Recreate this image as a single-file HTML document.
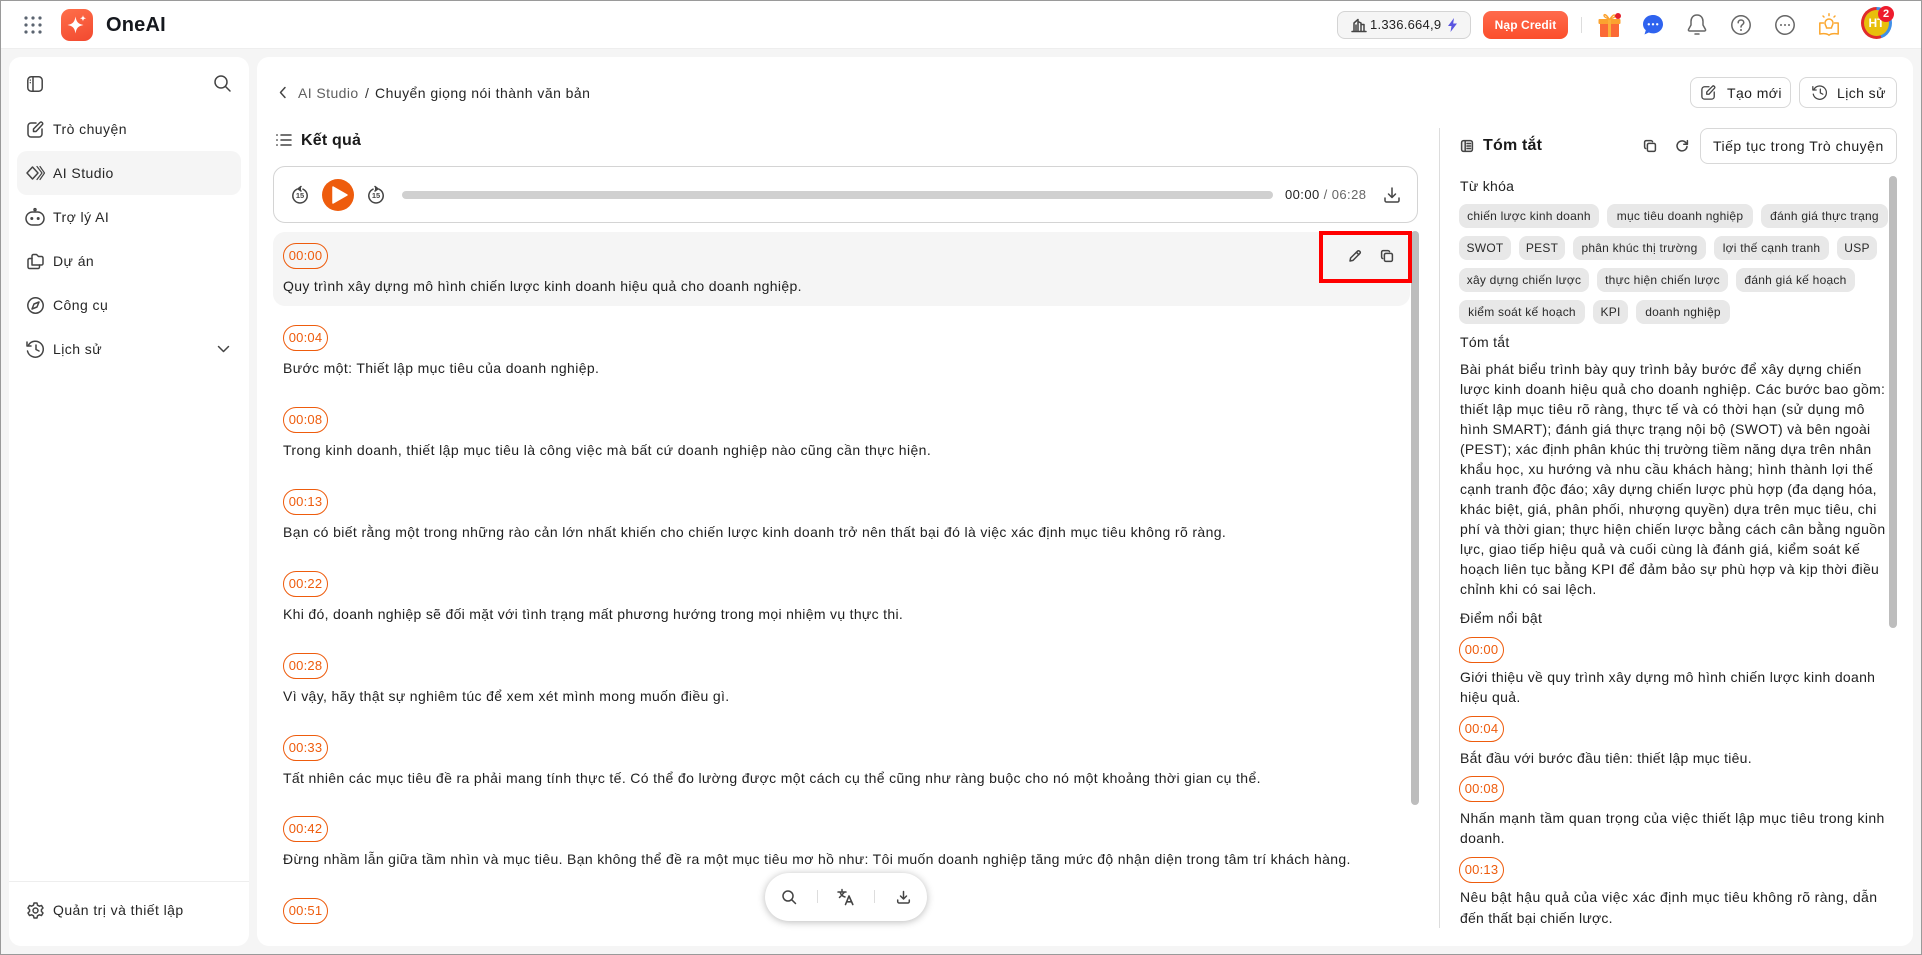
<!DOCTYPE html>
<html lang="vi"><head><meta charset="utf-8"><title>OneAI</title>
<style>
*{box-sizing:border-box}
html,body{margin:0;padding:0}
body{width:1922px;height:955px;overflow:hidden;position:relative;background:#f5f5f5;font-family:"Liberation Sans","Noto Sans CJK SC",sans-serif;color:#1f1f1f;font-size:14px}
.a{position:absolute}
.t{position:absolute;white-space:nowrap;line-height:20px;font-size:14px;letter-spacing:.34px}
.b{position:absolute;left:283px;width:45px;height:26px;border:1px solid #ee5c0d;border-radius:13px;color:#ee5c0d;font-size:13px;line-height:24px;text-align:center;letter-spacing:.2px}
.c{position:absolute;height:24px;background:#e8e8e8;border-radius:8px;font-size:12px;line-height:24px;text-align:center;white-space:nowrap;letter-spacing:.24px;color:#2a2a2a}
.s{position:absolute;left:53px;white-space:nowrap;line-height:20px;font-size:14px;letter-spacing:.44px;color:#262626}
svg{position:absolute;overflow:visible;fill:none;stroke:#444;stroke-width:1.5;stroke-linecap:round;stroke-linejoin:round}
.btn{position:absolute;background:#fff;border:1px solid #d8d8d8;border-radius:8px}
</style></head><body>

<!-- header -->
<div class="a" style="left:0;top:0;width:1922px;height:49px;background:#fff;border-bottom:1px solid #eee"></div>
<svg style="left:24px;top:16px;stroke:none;fill:#5b6470" width="18" height="18" viewBox="0 0 18 18"><circle cx="2" cy="2" r="1.6"/><circle cx="9" cy="2" r="1.6"/><circle cx="16" cy="2" r="1.6"/><circle cx="2" cy="9" r="1.6"/><circle cx="9" cy="9" r="1.6"/><circle cx="16" cy="9" r="1.6"/><circle cx="2" cy="16" r="1.6"/><circle cx="9" cy="16" r="1.6"/><circle cx="16" cy="16" r="1.6"/></svg>
<div class="a" style="left:61px;top:9px;width:32px;height:32px;border-radius:9px;background:linear-gradient(160deg,#ff6f4a,#f2492f)"></div>
<svg style="left:61px;top:9px;stroke:none;fill:#fff" width="32" height="32" viewBox="0 0 32 32"><path d="M14.5 7.5C15.4 13 17 14.8 22.5 16 17 17.2 15.4 19 14.5 24.5 13.6 19 12 17.2 6.5 16 12 14.8 13.6 13 14.5 7.5Z"/><path d="M22 6C22.4 8.2 23 8.8 25.2 9.2 23 9.6 22.4 10.2 22 12.4 21.6 10.2 21 9.6 18.8 9.2 21 8.8 21.6 8.2 22 6Z"/></svg>
<div class="t" style="left:106px;top:13px;font-size:20px;line-height:24px;font-weight:700;letter-spacing:.2px;color:#15181e">OneAI</div>

<div class="a" style="left:1337px;top:11px;width:134px;height:28px;background:#f5f5f5;border:1px solid #d4d4d4;border-radius:8px"></div>
<svg style="left:1352px;top:18px" width="14" height="14" viewBox="0 0 14 14" stroke-width="1.1"><path d="M0 13.5H14M2 13.5V5L6 1.5V13.5M6 3.5L9 5V13.5M9 6.5H12V13.5M4 7V13.5"/></svg>
<div class="t" style="left:1370px;top:15px;font-size:13px;letter-spacing:.24px;color:#222">1.336.664,9</div>
<svg style="left:1448px;top:18px;stroke:none" width="9" height="14" viewBox="0 0 9 14"><path d="M6 0L0 8H3.5L2.5 14L9 5.5H5.2Z" fill="#5a55e0"/></svg>
<div class="a" style="left:1483px;top:11px;width:85px;height:28px;border-radius:8px;background:linear-gradient(180deg,#ff6a4c,#fb4f2c);color:#fff;font-size:12px;font-weight:700;line-height:28px;text-align:center;letter-spacing:.1px">Nạp Credit</div>
<div class="a" style="left:1581px;top:17px;width:1px;height:16px;background:#ddd"></div>

<svg style="left:1598px;top:13px;stroke:none" width="24" height="24" viewBox="0 0 24 24"><rect x="2" y="10" width="19" height="14" rx="1" fill="#fb6a36"/><rect x="0.5" y="6" width="22" height="5" rx="1" fill="#fba22f"/><rect x="10" y="6" width="3" height="18" fill="#fbb03b"/><path d="M11 6C8 5 6 4 6 2.5 6 1 8 1 11 6ZM12 6C14 3 16 1 17 2.5 18 4 15 5 12 6Z" fill="none" stroke="#fba22f" stroke-width="1.4" style="stroke:#fba22f"/><circle cx="20" cy="3" r="3" fill="#e4202c"/></svg>
<svg style="left:1643px;top:15px;stroke:none" width="20" height="20" viewBox="0 0 20 20"><path d="M10 0C15.5 0 20 4 20 9.2S15.5 18.4 10 18.4C8.5 18.4 7 18 5.8 17.5L1.5 19.5 2.8 15.3C1 13.7 0 11.6 0 9.2 0 4 4.5 0 10 0Z" fill="#2f63ef"/><circle cx="5.8" cy="9.3" r="1.2" fill="#fff"/><circle cx="10" cy="9.3" r="1.2" fill="#fff"/><circle cx="14.2" cy="9.3" r="1.2" fill="#fff"/></svg>
<svg style="left:1687px;top:14px" width="20" height="22" viewBox="0 0 20 22"><path d="M10 1C6 1 4 4 4 7.5V11L1.5 15.5C1.2 16.2 1.6 17 2.5 17H17.5C18.4 17 18.8 16.2 18.5 15.5L16 11V7.5C16 4 14 1 10 1Z" style="stroke:#666"/><path d="M8 20H12" style="stroke:#666"/></svg>
<svg style="left:1731px;top:15px" width="20" height="20" viewBox="0 0 20 20"><g style="stroke:#666"><circle cx="10" cy="10" r="9.2"/><path d="M7.2 7.8C7.2 6 8.5 5 10 5S12.8 6 12.8 7.6C12.8 9.6 10 9.6 10 12"/></g><circle cx="10" cy="15" r="1" style="fill:#666;stroke:none"/></svg>
<svg style="left:1775px;top:15px" width="20" height="20" viewBox="0 0 20 20"><circle cx="10" cy="10" r="9.2" style="stroke:#666"/><circle cx="6" cy="10" r="1" style="fill:#666;stroke:none"/><circle cx="10" cy="10" r="1" style="fill:#666;stroke:none"/><circle cx="14" cy="10" r="1" style="fill:#666;stroke:none"/></svg>
<svg style="left:1819px;top:13px" width="20" height="23" viewBox="0 0 20 23"><g style="stroke:#fba72f"><path d="M4.5 10H.8V21C4 20.5 8 20.5 10 22.2 12 20.5 16 20.5 19.2 21V10H15.5"/><path d="M7.5 15C7.5 13.2 6 12.4 6 10A4 4 0 0 1 14 10C14 12.4 12.5 13.2 12.5 15Z"/><path d="M10 .8V2.5M4 3L5 4M16 3L15 4"/></g></svg>
<div class="a" style="left:1861px;top:7px;width:31px;height:32px;border-radius:50%;background:conic-gradient(#3f8fe8 0 45%,#e02b2b 45% 100%)"></div>
<div class="a" style="left:1864px;top:10px;width:25px;height:26px;border-radius:50%;background:#e8bf0c;color:#fff;font-size:12px;font-weight:700;line-height:26px;text-align:center">HT</div>
<div class="a" style="left:1878px;top:6px;width:16px;height:16px;border-radius:50%;background:#ee1c2e;color:#fff;font-size:11px;font-weight:700;line-height:16px;text-align:center">2</div>

<!-- sidebar -->
<div class="a" style="left:9px;top:57px;width:240px;height:889px;background:#fff;border-radius:12px"></div>
<div class="a" style="left:17px;top:151px;width:224px;height:44px;background:#f5f5f5;border-radius:10px"></div>
<svg style="left:27px;top:76px" width="16" height="16" viewBox="0 0 16 16"><rect x=".8" y=".8" width="14.4" height="14.4" rx="3.5"/><path d="M6 1V15"/><path d="M3.3 4V4.2M3.3 6.5V6.7" stroke-width="1.3"/></svg>
<svg style="left:214px;top:75px" width="17" height="17" viewBox="0 0 17 17"><circle cx="7" cy="7" r="6"/><path d="M11.5 11.5L16 16"/></svg>
<svg style="left:27px;top:121px" width="17" height="17" viewBox="0 0 17 17"><path d="M9 2H4A3 3 0 0 0 1 5V13A3 3 0 0 0 4 16H12A3 3 0 0 0 15 13V8"/><path d="M6.5 10.5V8L13 1.5C13.6.9 14.5.9 15.2 1.6S15.9 3.2 15.2 3.8L9 10.5Z"/></svg>
<svg style="left:26px;top:165px" width="19" height="16" viewBox="0 0 19 16"><path d="M6.5 2L12 8 6.5 14 1 8Z"/><path d="M11 1.5L16 8 11 14.5M14 1.5L18.5 8 14 14.5" stroke-width="1.2"/></svg>
<svg style="left:25px;top:208px" width="20" height="18" viewBox="0 0 20 18"><rect x="1" y="4" width="18" height="13" rx="6.5"/><circle cx="10" cy="1.6" r="1" /><circle cx="6.8" cy="10.5" r="1.5" style="fill:#444;stroke:none"/><circle cx="13.2" cy="10.5" r="1.5" style="fill:#444;stroke:none"/></svg>
<svg style="left:27px;top:253px" width="17" height="17" viewBox="0 0 17 17"><path d="M5 12V3A1.5 1.5 0 0 1 6.5 1.5H9.5L11.5 3.5H14.5A1.5 1.5 0 0 1 16 5V10.5A1.5 1.5 0 0 1 14.5 12Z"/><path d="M5 5.5H2.5A1.5 1.5 0 0 0 1 7V14A1.5 1.5 0 0 0 2.5 15.5H11A1.5 1.5 0 0 0 12.5 14V12"/></svg>
<svg style="left:27px;top:297px" width="17" height="17" viewBox="0 0 17 17"><circle cx="8.5" cy="8.5" r="7.7"/><path d="M12 5L10 10 5 12 7 7Z"/></svg>
<svg style="left:26px;top:340px" width="18" height="18" viewBox="0 0 18 18"><path d="M2.5 5A8 8 0 1 1 1.5 11"/><path d="M1 2V6H5" /><path d="M10 5V9.5L13 11"/></svg>
<div class="s" style="top:119px">Trò chuyện</div>
<div class="s" style="top:163px">AI Studio</div>
<div class="s" style="top:207px">Trợ lý AI</div>
<div class="s" style="top:251px">Dự án</div>
<div class="s" style="top:295px">Công cụ</div>
<div class="s" style="top:339px">Lịch sử</div>
<svg style="left:218px;top:346px" width="11" height="6" viewBox="0 0 11 6"><path d="M.5.5L5.5 5.5 10.5.5"/></svg>
<div class="a" style="left:9px;top:881px;width:240px;height:1px;background:#eee"></div>
<svg style="left:27px;top:902px" width="17" height="17" viewBox="0 0 17 17"><circle cx="8.5" cy="8.5" r="2.5"/><path d="M7 1H10L10.5 3.2 12.4 4.2 14.5 3.5 16 6 14.4 7.6V9.4L16 11 14.5 13.5 12.4 12.8 10.5 13.8 10 16H7L6.5 13.8 4.6 12.8 2.5 13.5 1 11 2.6 9.4V7.6L1 6 2.5 3.5 4.6 4.2 6.5 3.2Z"/></svg>
<div class="s" style="top:900px">Quản trị và thiết lập</div>

<!-- main -->
<div class="a" style="left:257px;top:57px;width:1656px;height:889px;background:#fff;border-radius:12px"></div>
<svg style="left:280px;top:87px" width="6" height="11" viewBox="0 0 6 11"><path d="M5 .5L.5 5.5 5 10.5"/></svg>
<div class="t" style="left:298px;top:83px;color:#5f5f5f;letter-spacing:.42px">AI Studio</div>
<div class="t" style="left:365px;top:83px;color:#333">/</div>
<div class="t" style="left:375px;top:83px;color:#262626;letter-spacing:.46px">Chuyển giọng nói thành văn bản</div>

<div class="btn" style="left:1690px;top:77px;width:101px;height:31px"></div>
<svg style="left:1701px;top:85px" width="15" height="15" viewBox="0 0 17 17"><path d="M9 2H4A3 3 0 0 0 1 5V13A3 3 0 0 0 4 16H12A3 3 0 0 0 15 13V8"/><path d="M6.5 10.5V8L13 1.5C13.6.9 14.5.9 15.2 1.6S15.9 3.2 15.2 3.8L9 10.5Z"/></svg>
<div class="t" style="left:1727px;top:83px;letter-spacing:.42px">Tạo mới</div>
<div class="btn" style="left:1799px;top:77px;width:98px;height:31px"></div>
<svg style="left:1812px;top:85px" width="15" height="15" viewBox="0 0 18 18"><path d="M2.5 5A8 8 0 1 1 1.5 11"/><path d="M1 2V6H5"/><path d="M10 5V9.5L13 11"/></svg>
<div class="t" style="left:1837px;top:83px;letter-spacing:.42px">Lịch sử</div>

<svg style="left:276px;top:134px" width="15" height="12" viewBox="0 0 15 12"><path d="M5 1H15M5 6H15M5 11H15M.8 1H1.2M.8 6H1.2M.8 11H1.2"/></svg>
<div class="t" style="left:301px;top:131px;font-size:16px;font-weight:700;letter-spacing:.2px;color:#1a1a1a">Kết quả</div>

<!-- player -->
<div class="a" style="left:273px;top:166px;width:1145px;height:57px;border:1px solid #d4d4d4;border-radius:12px;background:#fff"></div>
<svg style="left:292px;top:186px" width="16" height="18" viewBox="0 0 16 18" stroke-width="1.3"><path d="M5 3.2A7.2 7.2 0 1 0 11 3.2"/><path d="M9 .5L6 2.8 9 5" style="fill:#444"/></svg>
<div class="a" style="left:292px;top:190px;width:16px;text-align:center;font-size:7.5px;font-weight:700;line-height:12px;color:#444">15</div>
<div class="a" style="left:322px;top:179px;width:32px;height:32px;border-radius:50%;background:#ee5c0d"></div>
<svg style="left:332px;top:186px;stroke:none" width="16" height="18" viewBox="0 0 16 18"><path d="M1 1L15 9 1 17Z" fill="#fff" stroke="#fff" stroke-width="1.5" style="stroke:#fff"/></svg>
<svg style="left:368px;top:186px" width="16" height="18" viewBox="0 0 16 18" stroke-width="1.3"><path d="M5 3.2A7.2 7.2 0 1 0 11 3.2"/><path d="M7 .5L10 2.8 7 5" style="fill:#444"/></svg>
<div class="a" style="left:368px;top:190px;width:16px;text-align:center;font-size:7.5px;font-weight:700;line-height:12px;color:#444">15</div>
<div class="a" style="left:402px;top:191px;width:871px;height:8px;border-radius:4px;background:#d0d0d0"></div>
<div class="t" style="left:1285px;top:185px;font-size:13px;letter-spacing:.42px;color:#222">00:00 <span style="color:#666">/ 06:28</span></div>
<svg style="left:1384px;top:187px" width="16" height="16" viewBox="0 0 16 16"><path d="M8 1V10M4.5 7L8 10.5 11.5 7"/><path d="M1 11V13.5A1.5 1.5 0 0 0 2.5 15H13.5A1.5 1.5 0 0 0 15 13.5V11"/></svg>

<!-- transcript -->
<div class="a" style="left:273px;top:232px;width:1137px;height:74px;background:#f5f5f5;border-radius:12px"></div>
<div class="a" style="left:1411px;top:231px;width:8px;height:574px;background:#bdbdbd;border-radius:4px"></div>
<div class="a" style="left:1319px;top:231px;width:93px;height:52px;border:4px solid #f00"></div>
<svg style="left:1349px;top:250px" width="12" height="12" viewBox="0 0 12 12" stroke-width="1.2"><path d="M1 11L1.6 8 8.5 1.2C9.2.5 10 .6 10.7 1.3S11.5 2.8 10.8 3.5L4 10.4Z"/><path d="M7.5 2.3L9.8 4.6"/></svg>
<svg style="left:1381px;top:250px" width="12" height="12" viewBox="0 0 12 12" stroke-width="1.2"><rect x="3.4" y="3.4" width="8" height="8" rx="1.5"/><path d="M8.5 1.6C8.2 1 7.7.6 7 .6H2.2C1.3.6.6 1.3.6 2.2V7C.6 7.7 1 8.2 1.6 8.5"/></svg>

<div class="b" style="top:243px">00:00</div><div class="t" style="left:283px;top:276px">Quy trình xây dựng mô hình chiến lược kinh doanh hiệu quả cho doanh nghiệp.</div>
<div class="b" style="top:325px">00:04</div><div class="t" style="left:283px;top:358px;letter-spacing:.37px">Bước một: Thiết lập mục tiêu của doanh nghiệp.</div>
<div class="b" style="top:407px">00:08</div><div class="t" style="left:283px;top:440px;letter-spacing:.4px">Trong kinh doanh, thiết lập mục tiêu là công việc mà bất cứ doanh nghiệp nào cũng cần thực hiện.</div>
<div class="b" style="top:489px">00:13</div><div class="t" style="left:283px;top:522px;letter-spacing:.375px">Bạn có biết rằng một trong những rào cản lớn nhất khiến cho chiến lược kinh doanh trở nên thất bại đó là việc xác định mục tiêu không rõ ràng.</div>
<div class="b" style="top:571px">00:22</div><div class="t" style="left:283px;top:604px;letter-spacing:.315px">Khi đó, doanh nghiệp sẽ đối mặt với tình trạng mất phương hướng trong mọi nhiệm vụ thực thi.</div>
<div class="b" style="top:653px">00:28</div><div class="t" style="left:283px;top:686px;letter-spacing:.36px">Vì vậy, hãy thật sự nghiêm túc để xem xét mình mong muốn điều gì.</div>
<div class="b" style="top:735px">00:33</div><div class="t" style="left:283px;top:768px;letter-spacing:.356px">Tất nhiên các mục tiêu đề ra phải mang tính thực tế. Có thể đo lường được một cách cụ thể cũng như ràng buộc cho nó một khoảng thời gian cụ thể.</div>
<div class="b" style="top:816px">00:42</div><div class="t" style="left:283px;top:849px">Đừng nhầm lẫn giữa tầm nhìn và mục tiêu. Bạn không thể đề ra một mục tiêu mơ hồ như: Tôi muốn doanh nghiệp tăng mức độ nhận diện trong tâm trí khách hàng.</div>
<div class="b" style="top:898px">00:51</div>

<!-- floater -->
<div class="a" style="left:765px;top:873px;width:162px;height:48px;background:#fff;border-radius:24px;box-shadow:0 1px 8px rgba(0,0,0,.28)"></div>
<svg style="left:782px;top:890px" width="14" height="14" viewBox="0 0 14 14"><circle cx="6" cy="6" r="5"/><path d="M9.8 9.8L13.5 13.5"/></svg>
<div class="a" style="left:817px;top:890px;width:1px;height:13px;background:#ddd"></div>
<svg style="left:838px;top:889px" width="16" height="16" viewBox="0 0 16 16" stroke-width="1.3"><path d="M0 3H8M4 .5V3M1.5 8.5L6.5 3M2 3C3 6 5 7.5 7 8"/><path d="M7.5 15.5L11 7 14.8 15.5M9 12.8H13.3" stroke-width="1.6"/></svg>
<div class="a" style="left:874px;top:890px;width:1px;height:13px;background:#ddd"></div>
<svg style="left:897px;top:891px" width="13" height="13" viewBox="0 0 13 13"><path d="M6.5 .5V7.5M3.5 5L6.5 8 9.5 5"/><path d="M.7 9V10.5A1.5 1.5 0 0 0 2.2 12H10.8A1.5 1.5 0 0 0 12.3 10.5V9"/></svg>

<!-- right panel -->
<div class="a" style="left:1439px;top:128px;width:1px;height:800px;background:#ddd"></div>
<svg style="left:1461px;top:140px" width="12" height="12" viewBox="0 0 12 12" stroke-width="1.1"><rect x=".6" y=".6" width="10.8" height="10.8" rx="2" style="fill:#eee"/><path d="M4.2 1V11M6 3.5H9.5M6 6H9.5M6 8.5H9.5"/></svg>
<div class="t" style="left:1483px;top:136px;font-size:16px;font-weight:700;letter-spacing:.2px;color:#1a1a1a">Tóm tắt</div>
<svg style="left:1644px;top:140px" width="12" height="12" viewBox="0 0 12 12" stroke-width="1.2"><rect x="3.4" y="3.4" width="8" height="8" rx="1.5"/><path d="M8.5 1.6C8.2 1 7.7.6 7 .6H2.2C1.3.6.6 1.3.6 2.2V7C.6 7.7 1 8.2 1.6 8.5"/></svg>
<svg style="left:1676px;top:140px" width="12" height="12" viewBox="0 0 12 12" stroke-width="1.2"><path d="M11 6.5A5 5 0 1 1 9.5 2.3L11.3 4"/><path d="M11.4 .6V4.2H7.8"/></svg>
<div class="btn" style="left:1700px;top:128px;width:197px;height:36px"></div>
<div class="t" style="left:1713px;top:136px;letter-spacing:.5px">Tiếp tục trong Trò chuyện</div>
<div class="a" style="left:1889px;top:176px;width:8px;height:452px;background:#bdbdbd;border-radius:4px"></div>

<div class="t" style="left:1460px;top:176px;letter-spacing:.3px;color:#222">Từ khóa</div>
<div class="c" style="left:1459px;top:204px;width:140px">chiến lược kinh doanh</div>
<div class="c" style="left:1607px;top:204px;width:146px">mục tiêu doanh nghiệp</div>
<div class="c" style="left:1761px;top:204px;width:127px">đánh giá thực trạng</div>
<div class="c" style="left:1459px;top:236px;width:52px">SWOT</div>
<div class="c" style="left:1519px;top:236px;width:46px">PEST</div>
<div class="c" style="left:1573px;top:236px;width:133px">phân khúc thị trường</div>
<div class="c" style="left:1714px;top:236px;width:115px">lợi thế cạnh tranh</div>
<div class="c" style="left:1837px;top:236px;width:40px">USP</div>
<div class="c" style="left:1459px;top:268px;width:130px">xây dựng chiến lược</div>
<div class="c" style="left:1597px;top:268px;width:131px">thực hiện chiến lược</div>
<div class="c" style="left:1736px;top:268px;width:119px">đánh giá kế hoạch</div>
<div class="c" style="left:1459px;top:300px;width:126px">kiểm soát kế hoạch</div>
<div class="c" style="left:1593px;top:300px;width:35px">KPI</div>
<div class="c" style="left:1636px;top:300px;width:94px">doanh nghiệp</div>

<div class="t" style="left:1460px;top:332px;letter-spacing:.3px;color:#222">Tóm tắt</div>
<div class="t" style="left:1460px;top:359px">Bài phát biểu trình bày quy trình bảy bước để xây dựng chiến</div>
<div class="t" style="left:1460px;top:379px;letter-spacing:.32px">lược kinh doanh hiệu quả cho doanh nghiệp. Các bước bao gồm:</div>
<div class="t" style="left:1460px;top:399px;letter-spacing:.38px">thiết lập mục tiêu rõ ràng, thực tế và có thời hạn (sử dụng mô</div>
<div class="t" style="left:1460px;top:419px;letter-spacing:.26px">hình SMART); đánh giá thực trạng nội bộ (SWOT) và bên ngoài</div>
<div class="t" style="left:1460px;top:439px;letter-spacing:.24px">(PEST); xác định phân khúc thị trường tiềm năng dựa trên nhân</div>
<div class="t" style="left:1460px;top:459px;letter-spacing:.38px">khẩu học, xu hướng và nhu cầu khách hàng; hình thành lợi thế</div>
<div class="t" style="left:1460px;top:479px;letter-spacing:.24px">cạnh tranh độc đáo; xây dựng chiến lược phù hợp (đa dạng hóa,</div>
<div class="t" style="left:1460px;top:499px">khác biệt, giá, phân phối, nhượng quyền) dựa trên mục tiêu, chi</div>
<div class="t" style="left:1460px;top:519px;letter-spacing:.32px">phí và thời gian; thực hiện chiến lược bằng cách cân bằng nguồn</div>
<div class="t" style="left:1460px;top:539px">lực, giao tiếp hiệu quả và cuối cùng là đánh giá, kiểm soát kế</div>
<div class="t" style="left:1460px;top:559px;letter-spacing:.3px">hoạch liên tục bằng KPI để đảm bảo sự phù hợp và kịp thời điều</div>
<div class="t" style="left:1460px;top:579px">chỉnh khi có sai lệch.</div>

<div class="t" style="left:1460px;top:608px;letter-spacing:.3px;color:#222">Điểm nổi bật</div>
<div class="b" style="left:1459px;top:637px">00:00</div>
<div class="t" style="left:1460px;top:667px;letter-spacing:.3px">Giới thiệu về quy trình xây dựng mô hình chiến lược kinh doanh</div>
<div class="t" style="left:1460px;top:687px">hiệu quả.</div>
<div class="b" style="left:1459px;top:716px">00:04</div>
<div class="t" style="left:1460px;top:748px;letter-spacing:.26px">Bắt đầu với bước đầu tiên: thiết lập mục tiêu.</div>
<div class="b" style="left:1459px;top:776px">00:08</div>
<div class="t" style="left:1460px;top:808px;letter-spacing:.38px">Nhấn mạnh tầm quan trọng của việc thiết lập mục tiêu trong kinh</div>
<div class="t" style="left:1460px;top:828px">doanh.</div>
<div class="b" style="left:1459px;top:857px">00:13</div>
<div class="t" style="left:1460px;top:887px;letter-spacing:.4px">Nêu bật hậu quả của việc xác định mục tiêu không rõ ràng, dẫn</div>
<div class="t" style="left:1460px;top:908px;letter-spacing:.24px">đến thất bại chiến lược.</div>

<!-- outer frame -->
<div class="a" style="left:0;top:0;width:1922px;height:955px;border:1px solid #9a9a9a;pointer-events:none"></div>
</body></html>
